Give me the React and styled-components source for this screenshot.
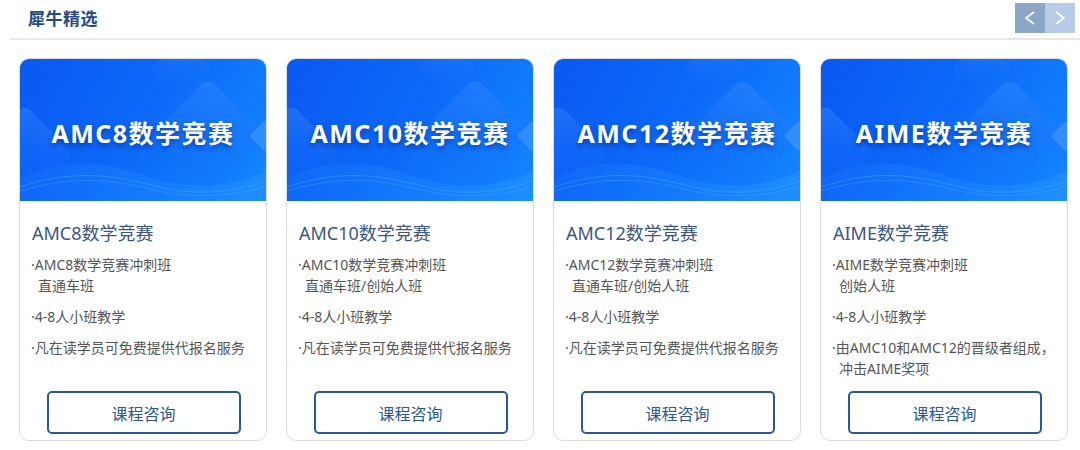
import React from 'react';
import styled, { createGlobalStyle } from 'styled-components';

const GlobalStyle = createGlobalStyle`
  body {
    margin: 0;
    background: #fff;
    font-family: "Noto Sans", "Noto Sans CJK SC", sans-serif;
  }
`;

const Page = styled.div`
  width: 1080px;
  height: 450px;
  overflow: hidden;
`;

const Header = styled.div`
  display: flex;
  align-items: center;
  justify-content: space-between;
  height: 38px;
  margin-left: 10px;
  border-bottom: 2px solid #e8e8e8;
`;

const Title = styled.h2`
  margin: 0 0 3px 18px;
  font-size: 17px;
  font-weight: 700;
  color: #244a84;
  letter-spacing: 0.5px;
`;

const Nav = styled.div`
  display: flex;
  align-self: flex-start;
  margin: 3px 5px 0 0;
`;

const NavButton = styled.button`
  width: 30px;
  height: 30px;
  border: none;
  padding: 0;
  display: flex;
  align-items: center;
  justify-content: center;
  background: ${(p) => (p.$active ? '#8ca6c8' : '#b9cce7')};
  cursor: pointer;
`;

const Row = styled.div`
  display: grid;
  grid-template-columns: repeat(4, 248px);
  gap: 19px;
  margin: 18px 0 0 19px;
`;

const Card = styled.div`
  height: 383px;
  box-sizing: border-box;
  border: 1px solid #dcdcdc;
  border-radius: 10px;
  overflow: hidden;
  display: flex;
  flex-direction: column;
  background: #fff;
`;

const Banner = styled.div`
  position: relative;
  height: 142px;
  flex: none;
  background: linear-gradient(120deg, #0a58f2 0%, #0b68f8 45%, #1486ff 100%);
  overflow: hidden;
`;

const BannerArt = styled.svg`
  position: absolute;
  inset: 0;
  width: 100%;
  height: 100%;
`;

const BannerText = styled.div`
  position: absolute;
  inset: 0;
  display: flex;
  align-items: center;
  justify-content: center;
  color: #fff;
  font-size: 25px;
  font-weight: 700;
  letter-spacing: 1.5px;
  text-shadow: 0 3px 5px rgba(0, 30, 120, 0.55);
  padding-top: 3px;
`;

const Body = styled.div`
  flex: 1;
  display: flex;
  flex-direction: column;
  padding: 19px 10px 6px 11px;
`;

const CardTitle = styled.div`
  font-size: 18px;
  color: #3b5585;
  margin: 0 0 8px 1px;
  line-height: 26px;
`;

const Point = styled.div`
  font-size: 14px;
  line-height: 21px;
  color: #555;
  margin-bottom: 10px;
`;

const Cont = styled.div`
  padding-left: 7px;
`;

const ConsultButton = styled.button`
  margin: auto auto 0;
  width: 194px;
  height: 43px;
  border: 2px solid #2b5894;
  border-radius: 5px;
  background: #fff;
  color: #2b5894;
  font-family: inherit;
  font-size: 16px;
  cursor: pointer;
`;

const courses = [
  {
    name: 'AMC8数学竞赛',
    points: [['AMC8数学竞赛冲刺班', '直通车班'], ['4-8人小班教学'], ['凡在读学员可免费提供代报名服务']],
  },
  {
    name: 'AMC10数学竞赛',
    points: [['AMC10数学竞赛冲刺班', '直通车班/创始人班'], ['4-8人小班教学'], ['凡在读学员可免费提供代报名服务']],
  },
  {
    name: 'AMC12数学竞赛',
    points: [['AMC12数学竞赛冲刺班', '直通车班/创始人班'], ['4-8人小班教学'], ['凡在读学员可免费提供代报名服务']],
  },
  {
    name: 'AIME数学竞赛',
    points: [['AIME数学竞赛冲刺班', '创始人班'], ['4-8人小班教学'], ['由AMC10和AMC12的晋级者组成，', '冲击AIME奖项']],
  },
];

function Decor() {
  return (
    <BannerArt viewBox="0 0 248 142" preserveAspectRatio="none">
      <defs>
        <linearGradient id="dia" x1="0" y1="0" x2="1" y2="1">
          <stop offset="0" stopColor="#3a8cff" stopOpacity="0.45" />
          <stop offset="1" stopColor="#0a5ef5" stopOpacity="0.05" />
        </linearGradient>
        <linearGradient id="wave" x1="0" y1="0" x2="1" y2="0">
          <stop offset="0" stopColor="#1a7dff" stopOpacity="0.5" />
          <stop offset="1" stopColor="#2fa0ff" stopOpacity="0.6" />
        </linearGradient>
      </defs>
      <rect x="140" y="-12" width="44" height="44" rx="6" transform="rotate(45 162 10)" fill="url(#dia)" />
      <rect x="150" y="35" width="80" height="80" rx="10" transform="rotate(45 190 75)" fill="url(#dia)" />
      <rect x="236" y="66" width="22" height="22" rx="3" transform="rotate(45 247 77)" fill="#3d95ff" opacity="0.7" />
      <rect x="-30" y="60" width="70" height="70" rx="8" transform="rotate(45 5 95)" fill="url(#dia)" />
      <path d="M0 120 C50 95 90 105 130 118 C175 132 215 128 248 112 L248 142 L0 142 Z" fill="url(#wave)" opacity="0.55" />
      <path d="M0 128 C60 108 100 118 140 128 C180 138 220 132 248 122" stroke="#5fb4ff" strokeWidth="0.6" fill="none" opacity="0.6" />
      <path d="M0 132 C60 114 100 122 140 132 C180 141 220 136 248 127" stroke="#5fb4ff" strokeWidth="0.6" fill="none" opacity="0.5" />
    </BannerArt>
  );
}

function Chevron({ dir }) {
  return (
    <svg width="12" height="14" viewBox="0 0 12 14">
      <path
        d={dir === 'left' ? 'M10 1 L2 7 L10 13' : 'M2 1 L10 7 L2 13'}
        stroke="#fff"
        strokeWidth="1.6"
        fill="none"
      />
    </svg>
  );
}

export default function App() {
  return (
    <Page>
      <GlobalStyle />
      <Header>
        <Title>犀牛精选</Title>
        <Nav>
          <NavButton $active>
            <Chevron dir="left" />
          </NavButton>
          <NavButton>
            <Chevron dir="right" />
          </NavButton>
        </Nav>
      </Header>
      <Row>
        {courses.map((c) => (
          <Card key={c.name}>
            <Banner>
              <Decor />
              <BannerText>{c.name}</BannerText>
            </Banner>
            <Body>
              <CardTitle>{c.name}</CardTitle>
              {c.points.map((lines) => (
                <Point key={lines[0]}>
                  ·{lines[0]}
                  {lines[1] && <Cont>{lines[1]}</Cont>}
                </Point>
              ))}
              <ConsultButton>课程咨询</ConsultButton>
            </Body>
          </Card>
        ))}
      </Row>
    </Page>
  );
}
